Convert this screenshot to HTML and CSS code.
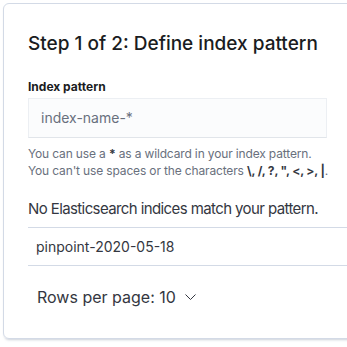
FILE: index.html
```html
<!DOCTYPE html>
<html>
<head>
<meta charset="utf-8">
<link rel="stylesheet" href="styles.css">
</head>
<body>
<div class="panel">
  <h2 class="title">Step 1 of 2: Define index pattern</h2>
  <div class="field">
    <label class="label">Index pattern</label>
    <div class="input">index-name-*</div>
    <div class="help">
      <div>You can use a <b>*</b> as a wildcard in your index pattern.</div>
      <div>You can't use spaces or the characters <b>\, /, ?, ", &lt;, &gt;, |</b>.</div>
    </div>
  </div>
  <div class="status">No Elasticsearch indices match your pattern.</div>
  <div class="table">
    <div class="row">pinpoint-2020-05-18</div>
  </div>
  <div class="pager">
    <span>Rows per page: 10</span>
    <svg class="chev" width="11" height="7" viewBox="0 0 11 7"><path d="M0.5 0.5 L5.5 5.5 L10.5 0.5" fill="none" stroke="#343741" stroke-width="1"/></svg>
  </div>
</div>
</body>
</html>
```
FILE: styles.css
```css
html, body {
  margin: 0;
  padding: 0;
  background: #fff;
}
body {
  font-family: Inter, "Noto Sans", sans-serif;
  color: #1a1c21;
  padding: 3px 0 0 3px;
  overflow: hidden;
  height: 347px;
  box-sizing: border-box;
}
.panel {
  width: 380px;
  height: 336px;
  box-sizing: border-box;
  border: 1px solid #d3dae6;
  border-radius: 6px;
  box-shadow: 0 1px 2px -1px rgba(152,162,179,0.4), 0 3px 3px -2px rgba(152,162,179,0.4);
  padding: 28px 0 0 24px;
}
.title {
  margin: 0;
  font-size: 19px;
  font-weight: 500;
  line-height: 24px;
  white-space: nowrap;
}
.field {
  margin-top: 23px;
  width: 299px;
}
.label {
  display: block;
  font-size: 12px;
  font-weight: 700;
  line-height: 16px;
  color: #1a1c21;
}
.input {
  margin-top: 3px;
  height: 40px;
  box-sizing: border-box;
  background: #fbfcfd;
  border: 1px solid #eceff3;
  border-bottom-color: #e1e5ea;
  padding: 0 12px;
  font-size: 14px;
  line-height: 38px;
  color: #69707d;
}
.help {
  margin-top: 7px;
  font-size: 12px;
  line-height: 17px;
  color: #69707d;
  white-space: nowrap;
  letter-spacing: -0.15px;
}
.help b {
  color: #343741;
  font-weight: 700;
}
.status {
  margin-top: 18px;
  font-size: 15px;
  line-height: 24px;
  letter-spacing: -0.6px;
  color: #343741;
  white-space: nowrap;
}
.table {
  margin-top: 6px;
  border-top: 1px solid #d3dae6;
  border-bottom: 1px solid #d3dae6;
}
.row {
  padding: 0 8px;
  height: 37px;
  line-height: 37px;
  font-size: 14px;
  color: #343741;
}
.pager {
  margin-top: 19px;
  padding-left: 9px;
  font-size: 16px;
  line-height: 24px;
  color: #343741;
  display: flex;
  align-items: center;
  gap: 9px;
}
.chev {
  display: block;
  margin-top: 1px;
}
```
